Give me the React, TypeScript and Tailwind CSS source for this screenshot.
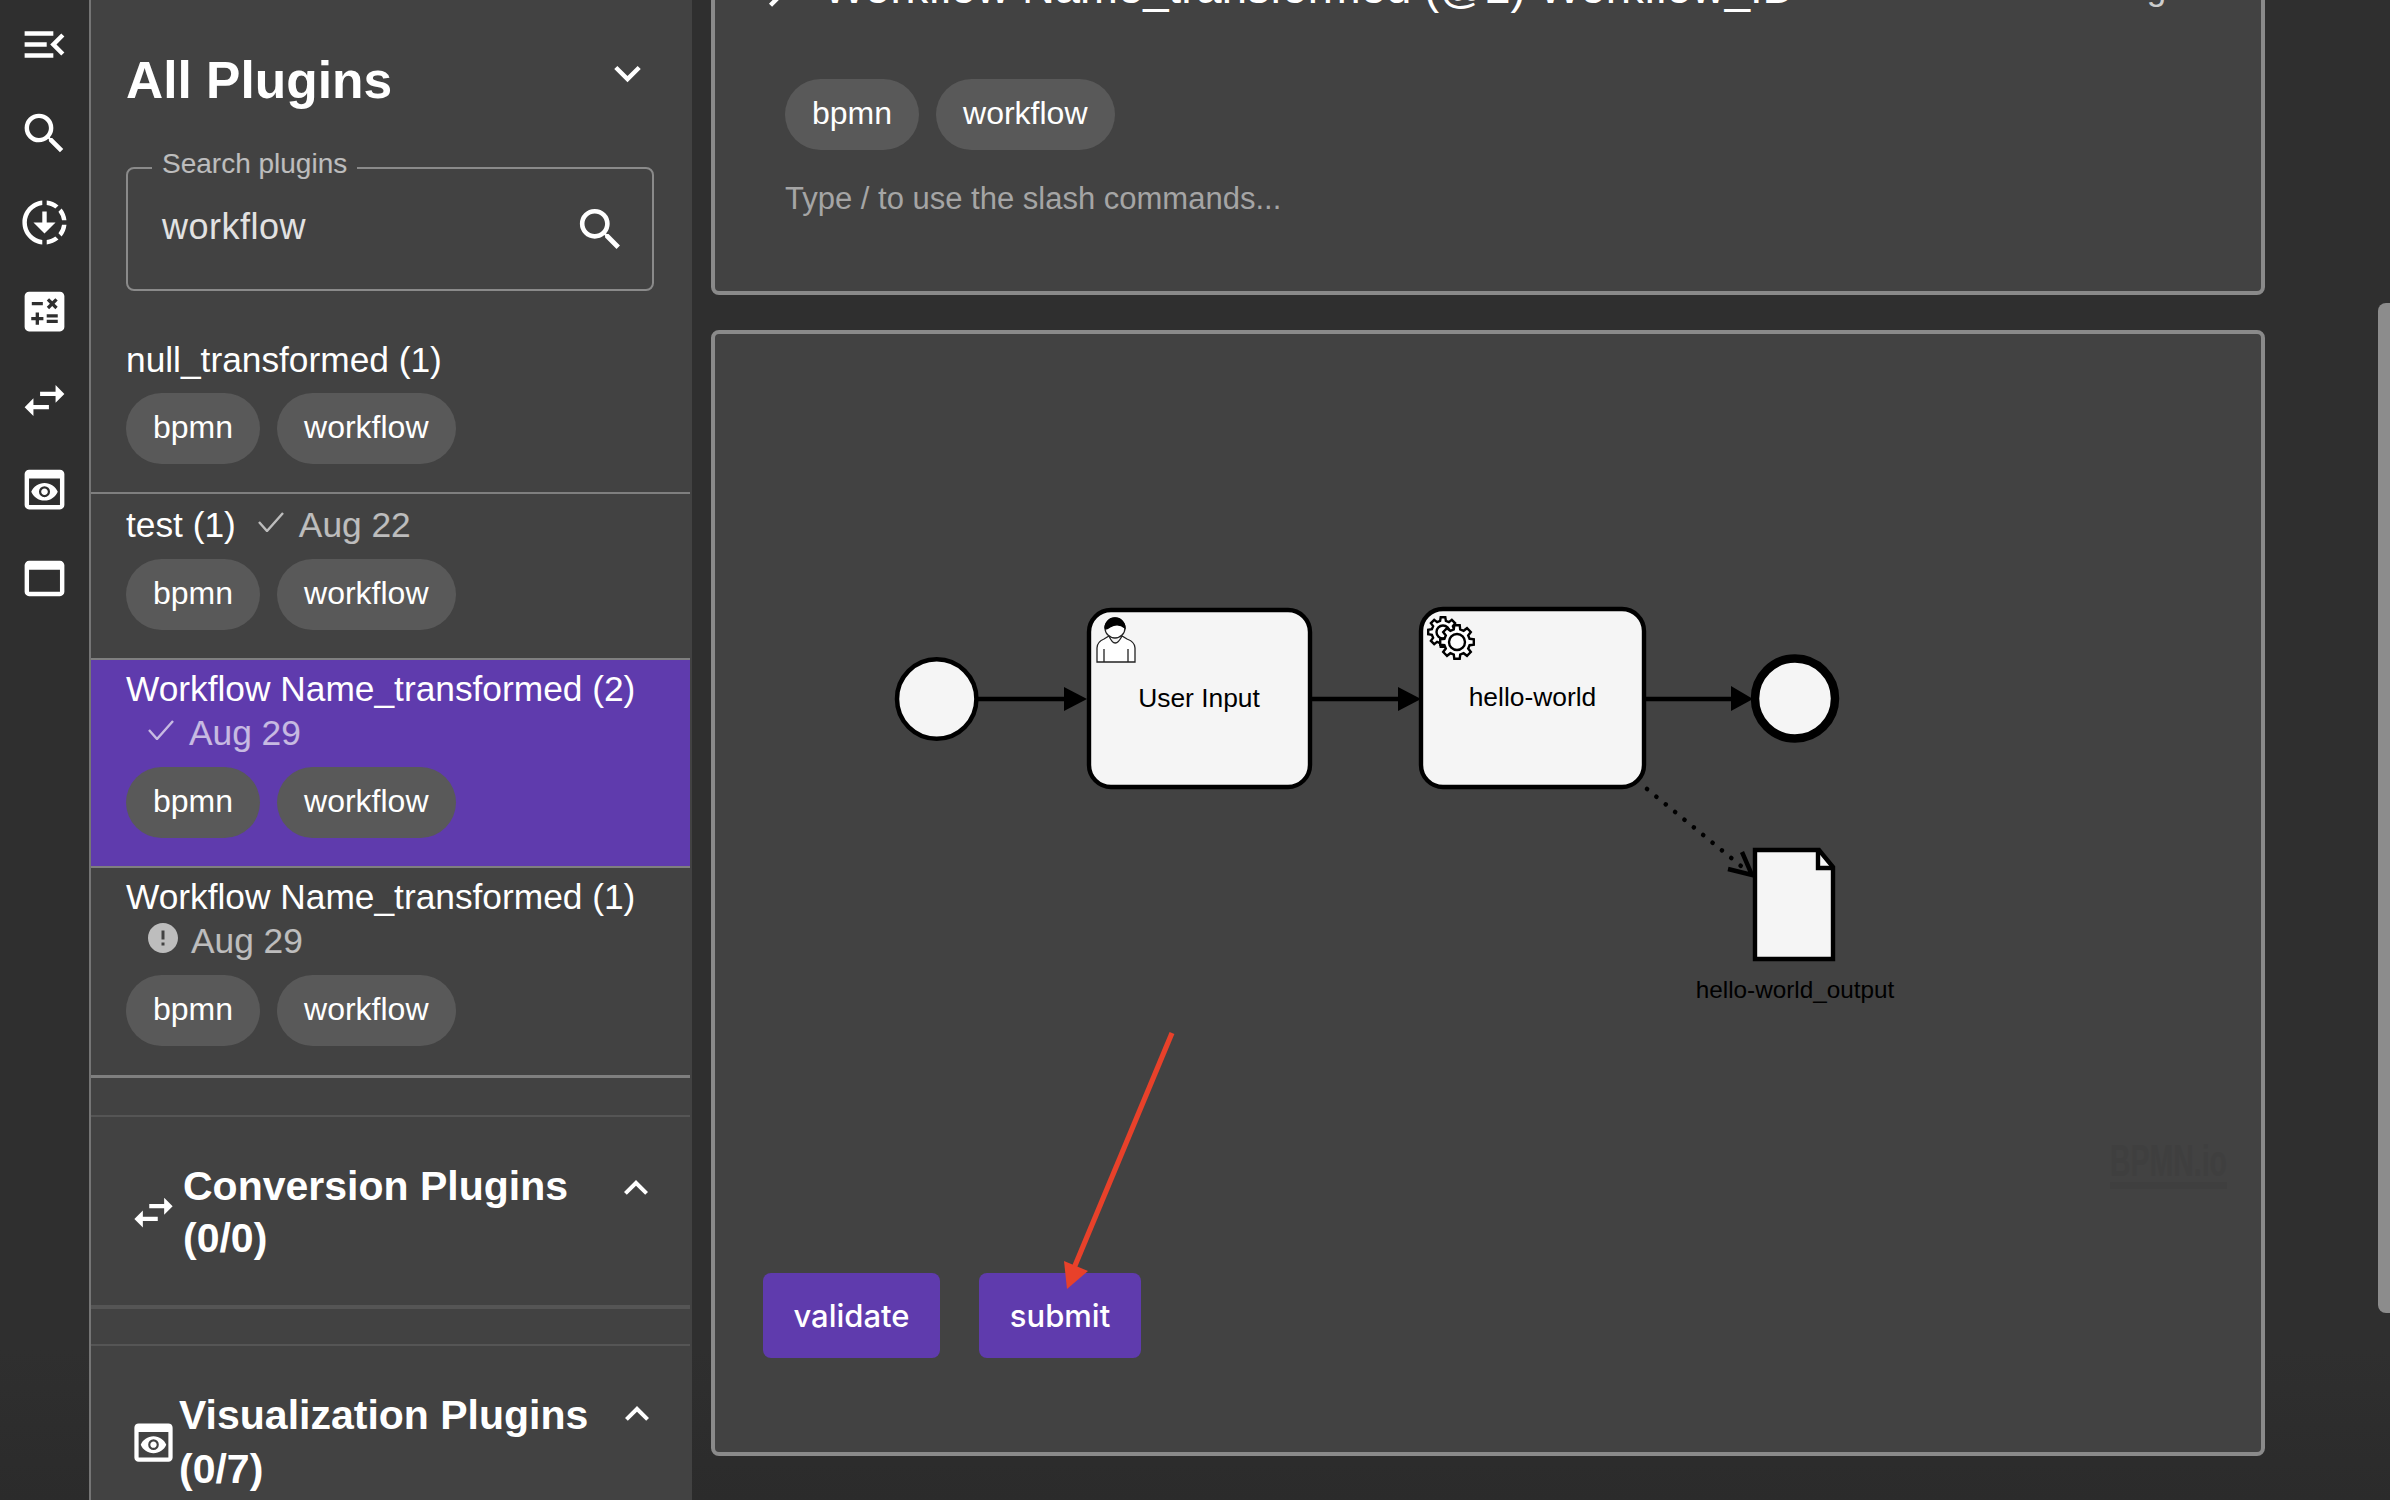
import type { ReactNode } from "react";
import {
  MdMenuOpen,
  MdSearch,
  MdDownloading,
  MdCalculate,
  MdSwapHoriz,
  MdPreview,
  MdWebAsset,
  MdKeyboardArrowDown,
  MdKeyboardArrowUp,
  MdChevronRight,
  MdError,
} from "react-icons/md";

const railIcons = [MdMenuOpen, MdSearch, MdDownloading, MdCalculate, MdSwapHoriz, MdPreview, MdWebAsset];

function Chip({ label }: { label: string }) {
  return (
    <span className="flex h-[71px] items-center rounded-[36px] bg-[#595959] px-[27px] pb-[3px] text-[32px] leading-none text-white">
      {label}
    </span>
  );
}

function Chips({ className = "" }: { className?: string }) {
  return (
    <div className={`flex gap-[17px] ${className}`}>
      <Chip label="bpmn" />
      <Chip label="workflow" />
    </div>
  );
}

function CheckMark() {
  return (
    <svg width="26" height="20" viewBox="0 0 26 20" className="shrink-0" fill="none" stroke="currentColor" strokeWidth="2.4">
      <path d="M1 10l8 9L25 1" />
    </svg>
  );
}

function PluginItem({
  title,
  date,
  status,
  active = false,
  className = "",
  chipGap = "mt-[12px]",
}: {
  title: string;
  date?: string;
  status?: "ok" | "error";
  active?: boolean;
  className?: string;
  chipGap?: string;
}) {
  return (
    <div className={`${active ? "bg-[#5f3bad]" : ""} pl-[35px] pr-[20px] ${className}`}>
      <div className="flex flex-wrap text-[35.3px] leading-[44px] text-white">
        <span>{title}</span>
        {date && (
          <span className="ml-[22px] flex items-center text-white/65">
            {status === "ok" ? (
              <>
                <span className="mb-[6px]">
                  <CheckMark />
                </span>
                <span className="ml-[15px]">{date}</span>
              </>
            ) : (
              <>
                <MdError size={36} className="-mx-[3px] mb-[6px] shrink-0" />
                <span className="ml-[13px]">{date}</span>
              </>
            )}
          </span>
        )}
      </div>
      <Chips className={chipGap} />
    </div>
  );
}

function Section({
  icon,
  title,
  className = "",
  chevronClass = "",
  leading,
}: {
  icon: ReactNode;
  title: string;
  className?: string;
  chevronClass?: string;
  leading: string;
}) {
  return (
    <div className={`flex items-center pl-[37px] ${className}`}>
      {icon}
      <div className={`flex-1 text-[41px] font-bold text-white ${leading}`}>{title}</div>
      <MdKeyboardArrowUp size={48} className={`shrink-0 self-start text-white ${chevronClass}`} />
    </div>
  );
}

function gearPath(cx: number, cy: number, outer: number, inner: number, teeth: number) {
  const pts: string[] = [];
  const step = (Math.PI * 2) / teeth;
  for (let i = 0; i < teeth; i++) {
    const a = i * step;
    const corners: [number, number][] = [
      [inner, a - step * 0.32],
      [outer, a - step * 0.2],
      [outer, a + step * 0.2],
      [inner, a + step * 0.32],
    ];
    for (const [r, t] of corners) {
      pts.push(`${(cx + r * Math.cos(t)).toFixed(1)} ${(cy + r * Math.sin(t)).toFixed(1)}`);
    }
  }
  return `M${pts.join("L")}Z`;
}

// BPMN canvas plus the red annotation arrow, in page coordinates
function Diagram() {
  const black = "#000";
  const paper = "#f5f5f5";
  return (
    <svg className="absolute inset-0 h-full w-full" viewBox="715 334 1546 1118" fontFamily="'Liberation Sans', sans-serif">
      <g fill="#3f3f3f">
        <text x="2110" y="1176" fontSize="45" fontWeight="700" textLength="117" lengthAdjust="spacingAndGlyphs">
          BPMN.io
        </text>
        <rect x="2110" y="1182" width="117" height="7" />
      </g>

      <g stroke={black} strokeWidth="4.4" fill="none">
        <path d="M978 699H1066" />
        <path d="M1312 699H1400" />
        <path d="M1646 699H1733" />
        <path d="M1647 789L1752 875" strokeLinecap="round" strokeWidth="4.6" strokeDasharray="0.1 12" />
        <path d="M1742 852L1752 875L1728 869" />
      </g>
      <path d="M1064 687L1087 699L1064 711Z" fill={black} />
      <path d="M1398 687L1421 699L1398 711Z" fill={black} />
      <path d="M1731 686L1753 699L1731 711Z" fill={black} />

      <circle cx="936.7" cy="699" r="39.7" fill={paper} stroke={black} strokeWidth="4.5" />
      <circle cx="1795" cy="698.5" r="40" fill={paper} stroke={black} strokeWidth="8.5" />

      <rect x="1089" y="610" width="221" height="177" rx="22" fill={paper} stroke={black} strokeWidth="4.4" />
      <rect x="1421" y="609" width="223" height="178" rx="22" fill={paper} stroke={black} strokeWidth="4.4" />

      {/* user task icon */}
      <g stroke="#222" strokeWidth="1.3" fill="#fff">
        <path d="M1097 662V648Q1097 642 1104 639L1109 636Q1115 650 1122 636L1127 639Q1135 642 1135 648V662Z" />
        <path d="M1104 649V662M1128 649V662" fill="none" />
        <circle cx="1115" cy="628" r="10" />
        <path d="M1105 628A10 10 0 0 1 1125 628Q1118 622 1110 627Q1106 630 1105 628Z" fill={black} stroke={black} />
      </g>

      {/* service task icon */}
      <g stroke={black} strokeWidth="2.4" fill="#fff">
        <path d={gearPath(1443, 632, 15, 11.5, 8)} />
        <circle cx="1443" cy="632" r="6.5" />
        <path d={gearPath(1457, 642, 17, 13, 8)} />
        <circle cx="1457" cy="642" r="8" />
      </g>

      <text x="1199" y="707" fontSize="26.4" textAnchor="middle" fill={black}>
        User Input
      </text>
      <text x="1532.5" y="706" fontSize="26.4" textAnchor="middle" fill={black}>
        hello-world
      </text>

      {/* data object */}
      <path d="M1755 850H1819L1833 867V959H1755Z" fill={paper} stroke={black} strokeWidth="4.4" />
      <path d="M1818 850V868H1833" fill="none" stroke={black} strokeWidth="4.4" />
      <text x="1795" y="998" fontSize="24.3" textAnchor="middle" fill={black}>
        hello-world_output
      </text>

      {/* annotation arrow */}
      <path d="M1172 1033L1074 1268" stroke="#e8412a" strokeWidth="5.2" fill="none" />
      <path d="M1064 1261L1088 1271L1067 1289Z" fill="#e8412a" />
    </svg>
  );
}

export default function App() {
  return (
    <div className="flex h-screen w-full overflow-hidden bg-linear-to-b from-[#2f2f2f] from-90% to-[#2b2b2b] font-['Liberation_Sans',sans-serif]">
      {/* Icon rail */}
      <nav className="flex w-[91px] shrink-0 flex-col border-r-2 border-[#757575] text-white">
        {railIcons.map((Icon, i) => (
          <div key={i} className="flex h-[89px] items-center justify-center">
            <Icon size={53} />
          </div>
        ))}
      </nav>

      {/* Plugin sidebar */}
      <aside className="flex w-[601px] shrink-0 flex-col bg-[#424242] pr-[2px]">
        <div className="flex items-start justify-between pl-[35px] pr-[36px] pt-[47px]">
          <h1 className="pt-[3px] text-[51.5px] font-bold leading-[60px] text-white">All Plugins</h1>
          <MdKeyboardArrowDown size={53} className="text-white" />
        </div>

        <div className="relative ml-[35px] mr-[36px] mt-[57px] flex h-[124px] items-center justify-between rounded-lg border-2 border-[#8a8a8a] pl-[34px] pr-[24px]">
          <span className="absolute -top-[19px] left-[24px] bg-[#424242] px-[10px] text-[28px] leading-[28px] text-white/65">
            Search plugins
          </span>
          <span className="mb-[4px] text-[36px] leading-none tracking-[0.5px] text-[#e2e2e2]">workflow</span>
          <MdSearch size={55} className="text-white" />
        </div>

        <div className="mt-[47px]">
          <PluginItem title="null_transformed (1)" className="border-b-2 border-[#7f7f7f] pb-[28px]" chipGap="mt-[11px]" />
          <PluginItem title="test (1)" date="Aug 22" status="ok" className="border-b-2 border-[#7f7f7f] pb-[28px] pt-[9px]" />
          <PluginItem
            title="Workflow Name_transformed (2)"
            date="Aug 29"
            status="ok"
            active
            className="border-b-2 border-[#7f7f7f] pb-[28px] pt-[7px]"
          />
          <PluginItem
            title="Workflow Name_transformed (1)"
            date="Aug 29"
            status="error"
            className="border-b-[3px] border-[#7f7f7f] pb-[29px] pt-[7px]"
          />
        </div>

        <div className="h-[39px] border-b-2 border-[#555]" />
        <Section
          icon={<MdSwapHoriz size={51} className="mr-[4px] shrink-0 text-white" />}
          title="Conversion Plugins (0/0)"
          leading="leading-[52px]"
          className="pb-[41px] pr-[30px] pt-[43px]"
          chevronClass="mt-[4px]"
        />
        <div className="h-[41px] border-b-2 border-t-4 border-[#555]" />
        <Section
          icon={<MdPreview size={51} className="shrink-0 text-white" />}
          title="Visualization Plugins (0/7)"
          leading="leading-[54px]"
          className="pr-[29px] pt-[42px]"
          chevronClass="mt-[2px]"
        />
      </aside>

      {/* Main column */}
      <main className="relative flex-1 pl-[19px] pr-[125px]">
        <section className="-mt-[100px] rounded-lg border-4 border-[#8a8a8a] bg-[#424242] pb-[72px] pl-[70px] pr-[46px] pt-[56px]">
          <div className="-ml-[35px] flex items-start">
            <MdChevronRight size={53} className="mt-[7px] shrink-0 text-white" />
            <h2 className="ml-[20px] flex-1 text-[45.5px] leading-[56px] text-white">Workflow Name_transformed (@2) Workflow_ID</h2>
            <span className="mt-[6px] text-[35px] leading-[44px] text-[#cccccc]">Aug 29</span>
          </div>
          <Chips className="mt-[59px]" />
          <p className="mt-[29px] text-[31px] leading-[40px] text-[#a5a5a5]">Type / to use the slash commands...</p>
        </section>

        <section className="relative mt-[35px] flex h-[1126px] items-end gap-[39px] rounded-lg border-4 border-[#8a8a8a] bg-[#424242] pb-[94px] pl-[48px]">
          <button className="flex h-[85px] w-[177px] items-center justify-center rounded-lg bg-[#5f3bad] pt-[2px] font-['Inter',sans-serif] text-[31px] font-medium text-white">
            validate
          </button>
          <button className="flex h-[85px] w-[162px] items-center justify-center rounded-lg bg-[#5f3bad] pt-[2px] font-['Inter',sans-serif] text-[31px] font-medium text-white">
            submit
          </button>
          <Diagram />
        </section>

        {/* Scroll thumb */}
        <div className="absolute right-0 top-[303px] h-[1010px] w-[12px] rounded-l-lg bg-[#8c8c8c]" />
      </main>
    </div>
  );
}
